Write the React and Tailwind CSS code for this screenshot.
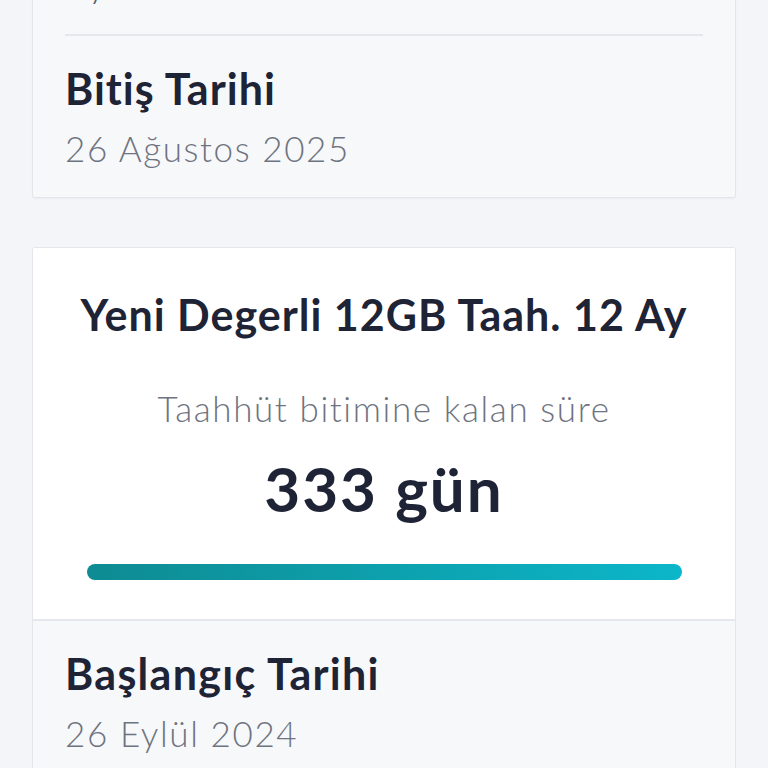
export default function App() {
  const font = { fontFamily: 'Lato, "Noto Sans", sans-serif' };
  return (
    <div className="min-h-screen bg-[#f3f5f8]" style={font}>
      <div className="h-[768px] overflow-hidden">
        <div className="px-8 flex flex-col gap-[49px] -mt-[60px]">
          {/* Card 1 */}
          <div className="bg-[#f7f8fa] border border-[#e3e6eb] rounded-[3px] shadow-[0_1px_2px_rgba(0,0,0,0.04)] px-8">
            <div className="pt-[24px] pb-[31px]">
              <p className="text-[35px] leading-[38px] font-light tracking-[1.6px] text-[#555a66]">Ay</p>
            </div>
            <div className="border-t-2 border-[#e4e7ec] pt-[31px] pb-[30px]">
              <h3 className="text-[43px] leading-[44px] font-bold tracking-[1px] text-[#1e2336]">Bitiş Tarihi</h3>
              <p className="text-[35px] leading-[38px] font-light tracking-[1.6px] text-[#6e7380] mt-[18px]">26 Ağustos 2025</p>
            </div>
          </div>

          {/* Card 2 */}
          <div className="border border-[#e3e6eb] rounded-[3px] overflow-hidden">
            <div className="bg-white flex flex-col items-center pt-[45px] pb-[39px]">
              <h2 className="text-[43px] leading-[44px] font-bold tracking-[1px] text-[#1e2336]">Yeni Degerli 12GB Taah. 12 Ay</h2>
              <p className="text-[35px] leading-[38px] font-light tracking-[1.6px] text-[#6e7380] mt-[52px]">Taahhüt bitimine kalan süre</p>
              <p className="text-[62px] leading-[64px] font-bold tracking-[2px] text-[#1e2336] mt-[29px]">333 gün</p>
              <div className="w-[595px] h-[16px] rounded-full bg-gradient-to-r from-[#0e8b92] to-[#0bb6c9] mt-[44px]" />
            </div>
            <div className="bg-[#f7f8fa] border-t-2 border-[#e4e7ec] px-8 pt-[31px] pb-[40px]">
              <h3 className="text-[43px] leading-[44px] font-bold tracking-[1.3px] text-[#1e2336]">Başlangıç Tarihi</h3>
              <p className="text-[35px] leading-[38px] font-light tracking-[1.6px] text-[#6e7380] mt-[18px]">26 Eylül 2024</p>
            </div>
          </div>
        </div>
      </div>
    </div>
  );
}
